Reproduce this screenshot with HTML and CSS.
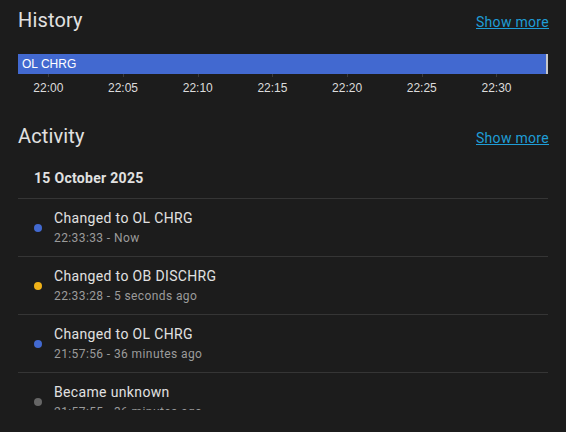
FILE: index.html
```html
<!DOCTYPE html>
<html lang="en">
<head>
<meta charset="utf-8">
<title>History and Activity</title>
<link rel="stylesheet" href="styles.css">
</head>
<body>
<div class="dialog">
  <section class="section history">
    <div class="head">
      <h2 class="title">History</h2>
      <a class="more" href="#">Show more</a>
    </div>
    <div class="timeline">
      <div class="bar">
        <span class="bar-label">OL CHRG</span>
        <span class="bar-tail"></span>
      </div>
      <div class="axis">
        <span class="tick">22:00</span>
        <span class="tick">22:05</span>
        <span class="tick">22:10</span>
        <span class="tick">22:15</span>
        <span class="tick">22:20</span>
        <span class="tick">22:25</span>
        <span class="tick">22:30</span>
      </div>
    </div>
  </section>

  <section class="section activity">
    <div class="head">
      <h2 class="title">Activity</h2>
      <a class="more" href="#">Show more</a>
    </div>
    <div class="log">
      <div class="date">15 October 2025</div>
      <div class="entry">
        <span class="dot dot-blue"></span>
        <div class="entry-text">
          <div class="primary">Changed to OL CHRG</div>
          <div class="secondary">22:33:33 - Now</div>
        </div>
      </div>
      <div class="entry">
        <span class="dot dot-yellow"></span>
        <div class="entry-text">
          <div class="primary">Changed to OB DISCHRG</div>
          <div class="secondary">22:33:28 - 5 seconds ago</div>
        </div>
      </div>
      <div class="entry">
        <span class="dot dot-blue"></span>
        <div class="entry-text">
          <div class="primary">Changed to OL CHRG</div>
          <div class="secondary">21:57:56 - 36 minutes ago</div>
        </div>
      </div>
      <div class="entry">
        <span class="dot dot-gray"></span>
        <div class="entry-text">
          <div class="primary">Became unknown</div>
          <div class="secondary">21:57:55 - 36 minutes ago</div>
        </div>
      </div>
    </div>
  </section>
</div>
</body>
</html>
```

FILE: styles.css
```css
* {
  box-sizing: border-box;
}

html, body {
  margin: 0;
  padding: 0;
  background: #1c1c1c;
  height: 100%;
  overflow: hidden;
}

body {
  font-family: Roboto, "Noto Sans", sans-serif;
  color: #e1e1e1;
}

.dialog {
  padding: 8px 18px 0 18px;
}

.head {
  display: flex;
  align-items: baseline;
  justify-content: space-between;
}

.title {
  margin: 0;
  font-size: 20px;
  line-height: 24px;
  font-weight: 400;
  letter-spacing: 0.15px;
  color: #e1e1e1;
}

.more {
  font-size: 14px;
  line-height: 20px;
  color: #1f9dd6;
  text-decoration: underline;
  letter-spacing: 0.3px;
  margin-right: -1px;
}

/* timeline */
.timeline {
  margin-top: 22px;
}

.bar {
  height: 20px;
  background: #4269d0;
  display: flex;
  align-items: center;
  justify-content: space-between;
}

.bar-label {
  font-family: "Liberation Sans", Arial, sans-serif;
  font-size: 12px;
  color: #ffffff;
  padding-left: 4px;
}

.bar-tail {
  width: 2px;
  height: 20px;
  background: #c8c8c8;
}

.axis {
  display: flex;
  margin-left: -7px;
  margin-top: 6px;
}

.tick {
  position: relative;
  flex: 0 0 74.7px;
  text-align: center;
  font-family: "Liberation Sans", Arial, sans-serif;
  font-size: 12px;
  line-height: 16px;
  color: #dcdcdc;
}

.tick::before {
  content: "";
  position: absolute;
  left: 50%;
  top: -6px;
  width: 1px;
  height: 3px;
  background: #3c3c3c;
}

/* activity */
.activity {
  margin-top: 28px;
}

.log {
  margin-top: 20px;
  height: 242px;
  overflow: hidden;
}

.date {
  font-size: 14px;
  line-height: 20px;
  font-weight: 700;
  letter-spacing: 0.3px;
  padding: 0 0 10px 16px;
  border-bottom: 1px solid #353535;
  margin-right: -1px;
}

.entry {
  display: flex;
  align-items: center;
  padding: 9px 0 8px 16px;
  border-bottom: 1px solid #353535;
  margin-right: -1px;
}

.dot {
  flex: 0 0 8px;
  width: 8px;
  height: 8px;
  border-radius: 50%;
  margin-right: 12px;
}

.dot-blue { background: #4269d0; }
.dot-yellow { background: #efb118; }
.dot-gray { background: #666666; }

.entry-text {
  display: flex;
  flex-direction: column;
}

.primary {
  font-size: 14px;
  line-height: 20px;
  letter-spacing: 0.35px;
  color: #e1e1e1;
}

.secondary {
  font-size: 12px;
  line-height: 20px;
  letter-spacing: 0.4px;
  color: #9b9b9b;
}
```
